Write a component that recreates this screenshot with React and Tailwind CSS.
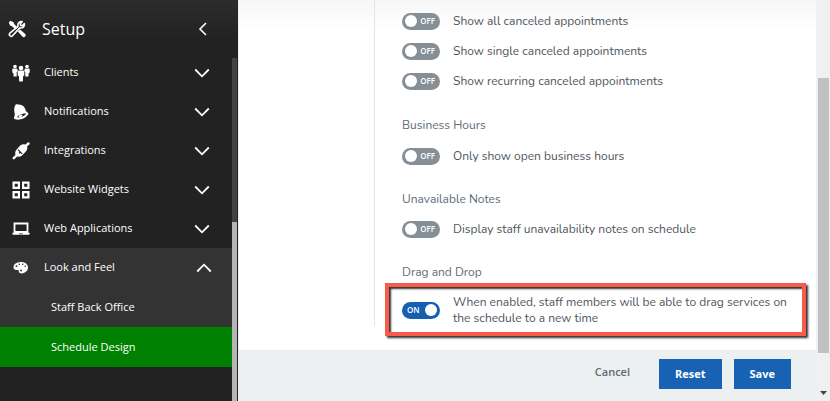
import { useState } from 'react'
import clsx from 'clsx'

function ToolsIcon() {
  return (
    <svg width="18" height="18" viewBox="0 0 18 18" fill="#fff" aria-hidden="true">
      <path d="M.8 2.400 2.400.800l3.100 1.400.7 1.900 3.300 3.300-2.100 2.100-3.400-3.300-1.900-.7z" />
      <path d="M9.800 11.600 12 9.400l5 4.400c.9.900.8 2 .1 2.800s-1.900.8-2.700-.1z" />
      <path
        d="M10 6.300c-.7-2.800 1.300-5.100 4.200-4.700l-2 2.100.3 1.700 1.800.3 2.100-2c.5 2.900-1.900 4.900-4.600 4.200l-7.300 7.900c-1.800 1.500-4.200-.8-2.600-2.600z"
        fill="none"
        stroke="#fff"
        strokeWidth="1.600"
        strokeLinejoin="round"
      />
    </svg>
  )
}

function ClientsIcon() {
  return (
    <svg width="18" height="18" viewBox="0 0 18 18" fill="#fff" aria-hidden="true">
      <circle cx="3" cy="2.500" r="1.800" />
      <circle cx="15" cy="2.500" r="1.800" />
      <path d="M.3 5.200q0-.6.7-.6h4l.9 2.500-1.200 1v4.500H1.500V9.500L.3 8.500zM17.700 5.200q0-.6-.7-.6h-4l-.9 2.500 1.200 1v4.500h3.200V9.500l1.200-1z" />
      <circle cx="9" cy="4" r="2.300" />
      <path d="M5.700 7.500q0-.9.900-.9h4.800q.9 0 .9.900v4l-1.200.8-.3 5.200H7.200l-.3-5.200-1.200-.8z" />
    </svg>
  )
}

function BellIcon() {
  return (
    <svg width="18" height="18" viewBox="0 0 18 18" aria-hidden="true">
      <path
        d="M3.100 2.700C3 1.600 4.600.7 5.600 1.500c4.100-.6 7 1.500 8 5.600.3 1.300 1 2.100 2.300 2.700 1.100.7.300 2.300-2.100 4.100-3.400 2.500-9.400 3.700-11.500 1.900-.8-.8-.1-1.500.3-2.800.7-2.500-.7-4.500-.4-7 .1-1.300.400-2.300.900-3.300z"
        fill="#fff"
      />
      <path d="M5 14.300c.5-1.800 6.400-4.600 9-3.700.1 1.500-5.600 4.600-9 3.700z" fill="#222" />
      <ellipse cx="8.500" cy="13" rx="2.100" ry="1.100" transform="rotate(-25 8.500 13)" fill="#fff" />
    </svg>
  )
}

function PlugIcon() {
  return (
    <svg width="18" height="18" viewBox="0 0 18 18" aria-hidden="true">
      <path d="M1.800 16.200 5 13M12.500 5l4-3.500" stroke="#fff" strokeWidth="2.400" strokeLinecap="round" />
      <path d="M4 8.200 8.200 3.600c2.200-1.700 4.500-1.600 6.100-.3 1.500 1.500 1.400 3.700-.2 5.900l-4.300 4.500c-1.600 1.200-4.200 1.400-5.400.2-1.500-1.300-1.600-3.900-.4-5.700z" fill="#fff" />
      <path d="m6 7.600 4.200 4.200M7 11.400l1.200-1.200" stroke="#222" strokeWidth="1.200" />
    </svg>
  )
}

function WidgetsIcon() {
  return (
    <svg width="18" height="18" viewBox="0 0 18 18" fill="none" stroke="#fff" strokeWidth="2.200" aria-hidden="true">
      <path d="M1.600 1.600h5.300v5.300H1.600zM11.100 1.600h5.300v5.300h-5.300zM1.600 11.100h5.300v5.300H1.600zM11.100 11.100h5.300v5.300h-5.300z" />
    </svg>
  )
}

function LaptopIcon() {
  return (
    <svg width="18" height="18" viewBox="0 0 18 18" aria-hidden="true">
      <path d="M2.500 3.500h13v8.500h-13z" fill="none" stroke="#fff" strokeWidth="1.800" />
      <path d="M.4 12.800h17.200v1q0 .9-.9.900H1.300q-.9 0-.9-.9z" fill="#fff" />
      <path d="M7 13.800h4" stroke="#222" strokeWidth=".7" />
    </svg>
  )
}

function PaletteIcon() {
  return (
    <svg width="18" height="18" viewBox="0 0 18 18" aria-hidden="true">
      <path
        d="M8.500 3.100c4.500-.3 7.500 2.200 7.500 5.500 0 3.200-2.800 5.800-6.300 5.800-1.900 0-3.100-.8-2.900-2.100.2-1-.7-1.500-1.700-1.300C3 11.500 1.500 10.300 1.500 8.300c0-2.900 3.200-5 7-5.200z"
        fill="#fff"
      />
      <g fill="#333">
        <circle cx="4.500" cy="7.200" r=".9" />
        <circle cx="7.300" cy="5.200" r=".8" />
        <circle cx="10.700" cy="5.200" r=".8" />
        <circle cx="13.200" cy="7.200" r=".8" />
        <circle cx="9" cy="11.600" r="1" />
      </g>
    </svg>
  )
}

function Chevron({ up }) {
  return (
    <svg width="16" height="16" viewBox="0 0 16 16" fill="none" stroke="#fff" strokeWidth="1.800" aria-hidden="true">
      <path d={up ? 'M1.200 11.500 8 4.700l6.800 6.800' : 'M1.200 4.500 8 11.300l6.800-6.800'} />
    </svg>
  )
}

const MENU = [
  { label: 'Clients', icon: ClientsIcon },
  { label: 'Notifications', icon: BellIcon },
  { label: 'Integrations', icon: PlugIcon },
  { label: 'Website Widgets', icon: WidgetsIcon },
  { label: 'Web Applications', icon: LaptopIcon },
  { label: 'Look and Feel', icon: PaletteIcon, children: ['Staff Back Office', 'Schedule Design'] },
]

const DEFAULTS = {
  allCanceled: false,
  singleCanceled: false,
  recurringCanceled: false,
  openHours: false,
  staffNotes: false,
  dragDrop: true,
}

function Sidebar() {
  const [open, setOpen] = useState('Look and Feel')
  const [page, setPage] = useState('Schedule Design')

  return (
    <aside className="w-[238px] shrink-0 flex flex-col bg-[#222] bg-linear-to-b from-[#2c2c2c] to-[#222] to-10% text-white font-['Open_Sans',sans-serif]">
      <div className="h-[53px] shrink-0 flex items-center pl-2 pr-6 pt-1">
        <ToolsIcon />
        <h1 className="flex-1 pl-4 text-base leading-5">Setup</h1>
        <button type="button" aria-label="Collapse menu" className="w-4">
          <svg width="10" height="14" viewBox="0 0 10 14" fill="none" stroke="#fff" strokeWidth="1.600">
            <path d="M8 1 2 7l6 6" />
          </svg>
        </button>
      </div>
      <div className="flex-1 flex">
        <nav className="flex-1 text-[11px]">
          {MENU.map(({ label, icon: Icon, children }) => {
            const expanded = open === label && !!children
            return (
              <div key={label} className={clsx(expanded && 'bg-[#333]')}>
                <button
                  type="button"
                  onClick={() => setOpen(expanded ? '' : label)}
                  className={clsx('w-full h-[39px] flex items-center pl-3 text-left', expanded ? 'pr-5' : 'pr-[22px]')}
                >
                  <Icon />
                  <span className="flex-1 pl-[14px]">{label}</span>
                  <Chevron up={expanded} />
                </button>
                {expanded &&
                  children.map((c) => (
                    <a
                      key={c}
                      href="#"
                      onClick={() => setPage(c)}
                      className={clsx('h-10 flex items-center pl-[51px]', page === c && 'bg-[#008000]')}
                    >
                      {c}
                    </a>
                  ))}
              </div>
            )
          })}
        </nav>
        <div className="w-[6px] mt-[5px] flex flex-col bg-[#434343] border-r border-[#222]">
          <div className="basis-[164px] shrink-0" />
          <div className="flex-1 bg-[#b5b5b5]" />
        </div>
      </div>
    </aside>
  )
}

function Toggle({ checked, onChange, children }) {
  return (
    <label className="flex items-center gap-[13px] min-h-[18px] cursor-pointer">
      <input type="checkbox" role="switch" checked={checked} onChange={onChange} className="sr-only" />
      <span
        className={clsx(
          "w-[38px] h-[17px] shrink-0 rounded-full flex items-center justify-between px-[3px] text-white text-[8px] leading-none font-semibold font-['Open_Sans',sans-serif]",
          checked ? 'bg-[#1660b2] flex-row-reverse' : 'bg-[#868e96]'
        )}
      >
        <span className="size-3 rounded-full bg-white" />
        <span className="px-[2px]">{checked ? 'ON' : 'OFF'}</span>
      </span>
      <span>{children}</span>
    </label>
  )
}

function Section({ title, children }) {
  return (
    <section className="mt-[26px]">
      <h2 className="text-[#5f6b75]">{title}</h2>
      {children}
    </section>
  )
}

export default function App() {
  const [settings, setSettings] = useState(DEFAULTS)

  const bind = (key) => ({
    checked: settings[key],
    onChange: (e) => setSettings({ ...settings, [key]: e.target.checked }),
  })

  return (
    <div className="min-h-screen flex bg-white">
      <Sidebar />
      <main className="flex-1 flex flex-col border-l border-[#ecf0f1] bg-linear-to-b from-[#f7f7f7] to-white to-8% font-[Nunito,Lato,sans-serif]">
        <div className="flex-1 flex mb-6">
          <div className="w-[135px] shrink-0" />
          <div className="flex-1 border-l border-[#dfe6e9] pl-[27px] pt-3 text-xs leading-4 text-[#4f565d]">
            <div className="flex flex-col gap-3">
              <Toggle {...bind('allCanceled')}>Show all canceled appointments</Toggle>
              <Toggle {...bind('singleCanceled')}>Show single canceled appointments</Toggle>
              <Toggle {...bind('recurringCanceled')}>Show recurring canceled appointments</Toggle>
            </div>
            <div className="pt-px">
              <Section title="Business Hours">
                <div className="mt-[14px]">
                  <Toggle {...bind('openHours')}>Only show open business hours</Toggle>
                </div>
              </Section>
              <Section title="Unavailable Notes">
                <div className="mt-[13px]">
                  <Toggle {...bind('staffNotes')}>Display staff unavailability notes on schedule</Toggle>
                </div>
              </Section>
              <Section title="Drag and Drop">
                <div className="mt-[3px] -ml-[17px] mr-[10px] -mb-[10px] border-4 border-[#f95a49] pt-[7px] pb-[6px] pl-[13px] pr-3 shadow-[2px_2px_2px_#333,inset_2px_2px_2px_#333]">
                  <Toggle {...bind('dragDrop')}>
                    When enabled, staff members will be able to drag services on the schedule to a new time
                  </Toggle>
                </div>
              </Section>
            </div>
          </div>
        </div>
        <footer className="h-[51px] shrink-0 flex items-start justify-end gap-3 pt-[9px] pr-[25px] bg-[#ecf0f1] text-[11px] font-['Open_Sans',sans-serif]">
          <button type="button" className="h-[26px] mr-[17px] font-semibold text-[#626c73]">
            Cancel
          </button>
          <button
            type="button"
            onClick={() => setSettings(DEFAULTS)}
            className="h-[30px] px-4 bg-[#1762b3] text-white font-bold"
          >
            Reset
          </button>
          <button type="button" className="h-[30px] px-4 bg-[#1762b3] text-white font-bold">
            Save
          </button>
        </footer>
      </main>
      <div className="w-[14px] shrink-0 flex flex-col bg-[#f0f0f0] pl-[2px] pr-px">
        <div className="basis-[78px] shrink-0" />
        <div className="flex-1 bg-[#c1c1c1]" />
        <div className="h-12 shrink-0 flex items-end justify-center pb-[6px]">
          <svg width="7" height="4" viewBox="0 0 7 4" fill="#444" aria-hidden="true">
            <path d="M0 0h7L3.500 4z" />
          </svg>
        </div>
      </div>
    </div>
  )
}
